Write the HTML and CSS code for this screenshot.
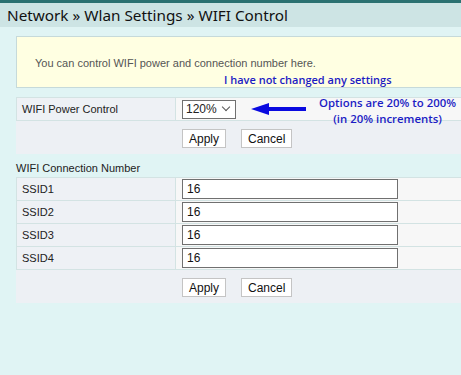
FILE: index.html
```html
<!DOCTYPE html>
<html lang="en">
<head>
    <meta charset="UTF-8">
    <meta name="viewport" content="width=device-width, initial-scale=1.0">
    <title>WIFI Control</title>
    <link rel="stylesheet" href="styles.css">
</head>
<body>
    <div class="topbar"></div>
    <div class="titlebar">Network &raquo; Wlan Settings &raquo; WIFI Control</div>

    <div class="content">
        <div class="info">
            <p>You can control WIFI power and connection number here.</p>
            <span class="note note-settings">I have not changed any settings</span>
        </div>

        <div class="section power">
            <div class="form-row">
                <div class="label">WIFI Power Control</div>
                <div class="value">
                    <div class="select">120%<span class="chev"></span></div>
                </div>
            </div>
            <div class="actions">
                <button>Apply</button>
                <button>Cancel</button>
            </div>

            <!-- annotation on top of the screenshot -->
            <svg class="arrow" width="56" height="14" viewBox="0 0 56 14">
                <polygon points="0,6 18,0 18,4 55,4 55,8 18,8 18,12" fill="#0a0ae0"/>
            </svg>
            <div class="note note-options">Options are 20% to 200%<br>(in 20% increments)</div>
        </div>

        <div class="group-title">WIFI Connection Number</div>
        <div class="section">
            <div class="form-row">
                <div class="label">SSID1</div>
                <div class="value"><input type="text" value="16"></div>
            </div>
            <div class="form-row">
                <div class="label">SSID2</div>
                <div class="value"><input type="text" value="16"></div>
            </div>
            <div class="form-row">
                <div class="label">SSID3</div>
                <div class="value"><input type="text" value="16"></div>
            </div>
            <div class="form-row">
                <div class="label">SSID4</div>
                <div class="value"><input type="text" value="16"></div>
            </div>
            <div class="actions">
                <button>Apply</button>
                <button>Cancel</button>
            </div>
        </div>
    </div>
</body>
</html>
```

FILE: styles.css
```css
body {
    margin: 0;
    background-color: #e0f4f4;
    font-family: "Liberation Sans", Arial, sans-serif;
    font-size: 11px;
    color: #222;
}
.topbar {
    height: 3px;
    background-color: #2b7171;
}
.titlebar {
    height: 24px;
    line-height: 24px;
    padding-left: 7px;
    background-color: #cde4e4;
    font-family: "Noto Sans", "Open Sans", sans-serif;
    font-size: 15.3px;
    color: #111;
}
.content {
    padding: 9px 0 0 16px;
}
.info {
    position: relative;
    height: 50px;
    background-color: #ffffe2;
    border: 1px solid #c6dada;
    border-right: none;
}
.info p {
    margin: 0;
    padding: 20px 0 0 18px;
    color: #555;
}
.note {
    position: absolute;
    font-family: "Open Sans", "Noto Sans", sans-serif;
    font-weight: 600;
    font-size: 11px;
    color: #1c1cc4;
    white-space: nowrap;
}
.note-settings {
    left: 207px;
    top: 35px;
}
.section {
    position: relative;
    border-top: 1px solid #d3e3e3;
}
.power {
    margin-top: 9px;
}
.form-row {
    display: grid;
    grid-template-columns: 160px 1fr;
    height: 22px;
    border-bottom: 1px solid #d3e3e3;
}
.label {
    padding-left: 5px;
    line-height: 22px;
    background-color: #eef1f5;
    border-left: 1px solid #d3e3e3;
    border-right: 1px solid #d3e3e3;
}
.value {
    display: flex;
    align-items: center;
    padding-left: 6px;
    background-color: #f7f7f7;
}
.select {
    display: flex;
    align-items: center;
    justify-content: space-between;
    box-sizing: border-box;
    width: 54px;
    height: 19px;
    padding: 0 6px 0 3px;
    background-color: #fff;
    border: 1px solid #707070;
    font-size: 12px;
}
.chev {
    width: 5px;
    height: 5px;
    margin-top: -4px;
    border-right: 1px solid #555;
    border-bottom: 1px solid #555;
    transform: rotate(45deg);
}
input {
    box-sizing: border-box;
    width: 216px;
    height: 20px;
    margin: 0;
    padding: 0 4px;
    border: 1px solid #707070;
    font-family: "Liberation Sans", Arial, sans-serif;
    font-size: 12px;
    color: #111;
}
.actions {
    display: flex;
    gap: 15px;
    height: 33px;
    padding: 8px 0 0 166px;
    box-sizing: border-box;
    background-color: #edf0f4;
}
button {
    box-sizing: border-box;
    height: 19px;
    padding: 0 6px;
    background-color: #fff;
    border: 1px solid #c4c4c4;
    font-family: "Liberation Sans", Arial, sans-serif;
    font-size: 12px;
    color: #111;
}
.arrow {
    position: absolute;
    left: 235px;
    top: 5px;
}
.note-options {
    left: 303px;
    top: -3px;
    font-size: 11.4px;
    text-align: center;
    line-height: 16px;
}
.group-title {
    padding: 8px 0 3px 0;
    line-height: 12px;
}
```
